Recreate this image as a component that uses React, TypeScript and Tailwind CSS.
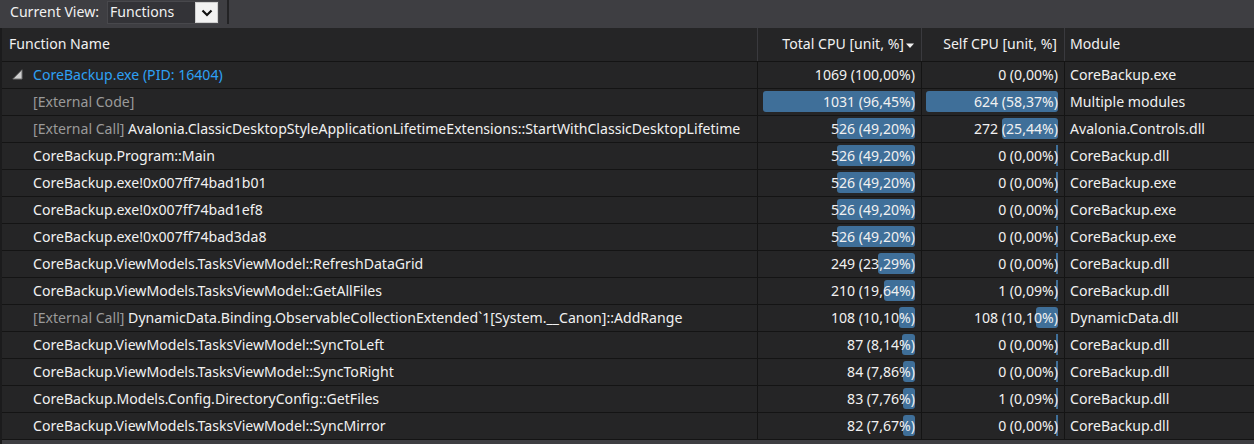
import React from "react";

type Row = {
  prefix?: string;
  name: string;
  nameClass?: string;
  expander?: boolean;
  total: string;
  totalBar: number | null;
  self: string;
  selfBar: number | null;
  module: string;
};

const rows: Row[] = [
  { name: "CoreBackup.exe (PID: 16404)", nameClass: "text-[#2ea0f4]", expander: true, total: "1069 (100,00%)", totalBar: null, self: "0 (0,00%)", selfBar: null, module: "CoreBackup.exe" },
  { name: "[External Code]", nameClass: "text-[#9a9a9a]", total: "1031 (96,45%)", totalBar: 152, self: "624 (58,37%)", selfBar: 132, module: "Multiple modules" },
  { prefix: "[External Call] ", name: "Avalonia.ClassicDesktopStyleApplicationLifetimeExtensions::StartWithClassicDesktopLifetime", total: "526 (49,20%)", totalBar: 78, self: "272 (25,44%)", selfBar: 56, module: "Avalonia.Controls.dll" },
  { name: "CoreBackup.Program::Main", total: "526 (49,20%)", totalBar: 78, self: "0 (0,00%)", selfBar: 2, module: "CoreBackup.dll" },
  { name: "CoreBackup.exe!0x007ff74bad1b01", total: "526 (49,20%)", totalBar: 78, self: "0 (0,00%)", selfBar: 2, module: "CoreBackup.exe" },
  { name: "CoreBackup.exe!0x007ff74bad1ef8", total: "526 (49,20%)", totalBar: 78, self: "0 (0,00%)", selfBar: 2, module: "CoreBackup.exe" },
  { name: "CoreBackup.exe!0x007ff74bad3da8", total: "526 (49,20%)", totalBar: 78, self: "0 (0,00%)", selfBar: 2, module: "CoreBackup.exe" },
  { name: "CoreBackup.ViewModels.TasksViewModel::RefreshDataGrid", total: "249 (23,29%)", totalBar: 37, self: "0 (0,00%)", selfBar: 2, module: "CoreBackup.dll" },
  { name: "CoreBackup.ViewModels.TasksViewModel::GetAllFiles", total: "210 (19,64%)", totalBar: 31, self: "1 (0,09%)", selfBar: 2, module: "CoreBackup.dll" },
  { prefix: "[External Call] ", name: "DynamicData.Binding.ObservableCollectionExtended`1[System.__Canon]::AddRange", total: "108 (10,10%)", totalBar: 16, self: "108 (10,10%)", selfBar: 22, module: "DynamicData.dll" },
  { name: "CoreBackup.ViewModels.TasksViewModel::SyncToLeft", total: "87 (8,14%)", totalBar: 13, self: "0 (0,00%)", selfBar: 2, module: "CoreBackup.dll" },
  { name: "CoreBackup.ViewModels.TasksViewModel::SyncToRight", total: "84 (7,86%)", totalBar: 12, self: "0 (0,00%)", selfBar: 2, module: "CoreBackup.dll" },
  { name: "CoreBackup.Models.Config.DirectoryConfig::GetFiles", total: "83 (7,76%)", totalBar: 12, self: "1 (0,09%)", selfBar: 2, module: "CoreBackup.dll" },
  { name: "CoreBackup.ViewModels.TasksViewModel::SyncMirror", total: "82 (7,67%)", totalBar: 12, self: "0 (0,00%)", selfBar: 2, module: "CoreBackup.dll" },
];

function Bar({ w }: { w: number | null }) {
  if (w === null) return null;
  return (
    <div
      className={`absolute right-[6px] top-[2px] h-[21px] bg-[#3f6f99] ${w > 3 ? "rounded-[3px]" : ""}`}
      style={{ width: w }}
    />
  );
}

export default function App() {
  return (
    <div className="w-[1254px] h-[444px] overflow-hidden bg-[#252526] text-[#f1f1f1] font-['Noto_Sans',sans-serif] text-[14.1px] leading-none">
      {/* Toolbar */}
      <div className="flex h-[28px] items-start bg-[#3e3e42]">
        <div className="ml-[10px] w-[97px] shrink-0 h-[24px] flex items-center">Current View:</div>
        <div className="mt-[1px] w-[112px] h-[23px] bg-[#333337] border border-[#48484c] flex items-center">
          <span className="pl-[2px]">Functions</span>
          <div className="ml-auto mr-0 w-[23px] h-[21px] bg-[#f2f2f2] border border-[#cfcfcf] flex items-center justify-center">
            <svg width="12" height="8" viewBox="0 0 12 8">
              <path d="M1.5 1.5 L6 6 L10.5 1.5" fill="none" stroke="#111" strokeWidth="2.2" />
            </svg>
          </div>
        </div>
        <div className="ml-[8px] w-[2px] h-[24px] bg-[#232325]" />
      </div>

      {/* Table */}
      <div className="border-l-2 border-[#1b1b1c]">
        {/* Header */}
        <div className="grid grid-cols-[756px_164px_143px_1fr] h-[34px] border-b border-[#141414]">
          <div className="flex items-center pl-[7px] border-r border-[#3a3a3e]">Function Name</div>
          <div className="flex items-center justify-end pr-[6px] border-r border-[#3a3a3e]">
            <span>Total CPU [unit, %]</span>
            <svg width="10" height="6" viewBox="0 0 10 6" className="ml-[1px] mt-[2px]">
              <path d="M1 0.5 L9 0.5 L5 5 Z" fill="#f1f1f1" />
            </svg>
          </div>
          <div className="flex items-center justify-end pr-[7px] border-r border-[#3a3a3e]">Self CPU [unit, %]</div>
          <div className="flex items-center pl-[5px]">Module</div>
        </div>

        {rows.map((r, i) => (
          <div key={i} className="grid grid-cols-[756px_164px_143px_1fr] h-[27px] border-b border-[#141414]">
            <div className="relative flex items-center pl-[31px] border-r border-[#141414] whitespace-nowrap overflow-hidden">
              {r.expander && (
                <svg width="11" height="11" viewBox="0 0 11 11" className="absolute left-[10px] top-[7px]">
                  <path d="M10 0.8 L10 10 L0.8 10 Z" fill="#cfcfcf" stroke="#6e6e6e" strokeWidth="1" />
                </svg>
              )}
              {r.prefix && <span className="text-[#9a9a9a] whitespace-pre">{r.prefix}</span>}
              <span className={r.nameClass ?? ""}>{r.name}</span>
            </div>
            <div className="relative flex items-center justify-end pr-[6px] border-r border-[#141414]">
              <Bar w={r.totalBar} />
              <span className="relative">{r.total}</span>
            </div>
            <div className="relative flex items-center justify-end pr-[6px] border-r border-[#141414]">
              <Bar w={r.selfBar} />
              <span className="relative">{r.self}</span>
            </div>
            <div className="flex items-center pl-[5px] whitespace-nowrap">{r.module}</div>
          </div>
        ))}
        <div className="h-[12px] bg-[#3e3e42]" />
      </div>
    </div>
  );
}
